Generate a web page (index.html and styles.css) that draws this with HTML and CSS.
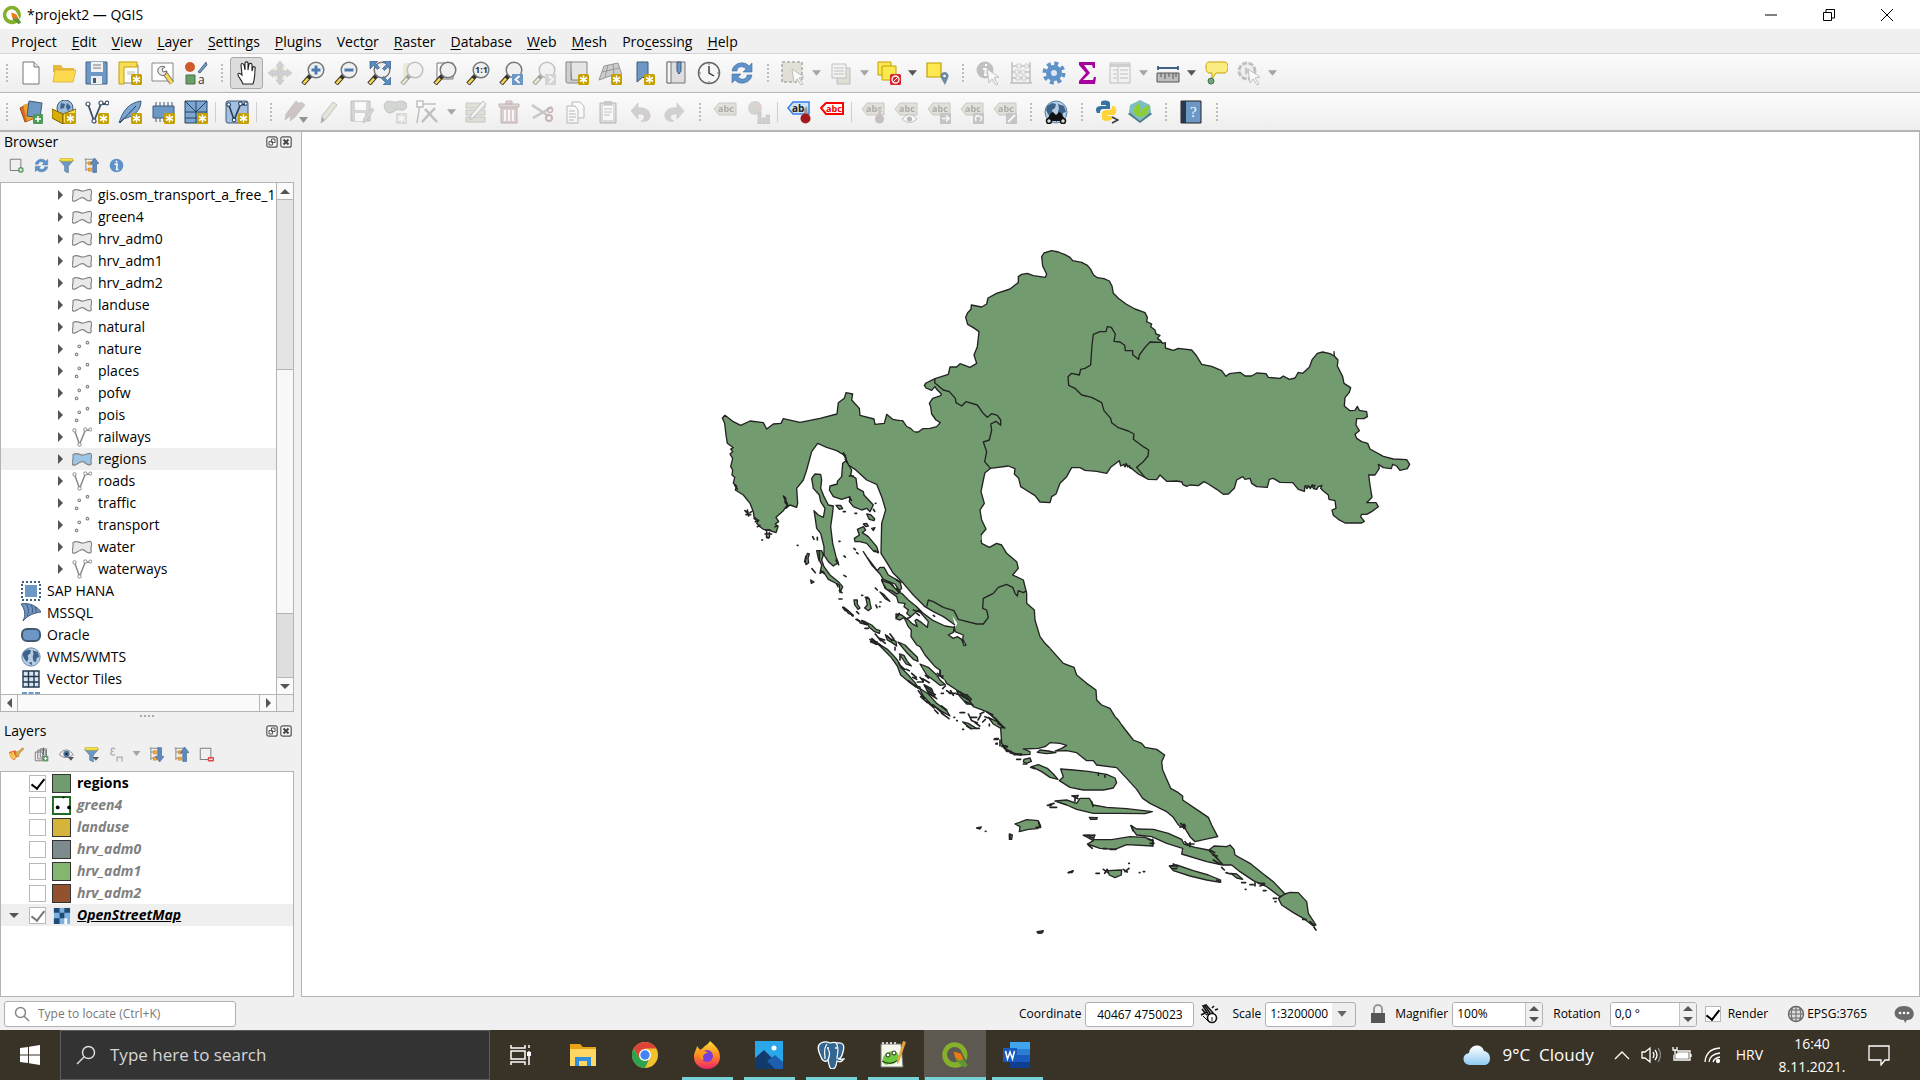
FILE: index.html
```html
<!DOCTYPE html>
<html lang="en">
<head>
<meta charset="utf-8">
<title>*projekt2 — QGIS</title>
<link rel="stylesheet" href="styles.css">
</head>
<body>
<svg class="gradients" aria-hidden="true">
  <linearGradient id="gFox" x1="0" y1="0" x2="0" y2="1"><stop offset="0" stop-color="#ffe03a"/><stop offset=".5" stop-color="#ff8a1e"/><stop offset="1" stop-color="#f0246b"/></linearGradient>
  <linearGradient id="gCloud" x1="0" y1="0" x2="0" y2="1"><stop offset="0" stop-color="#ffffff"/><stop offset="1" stop-color="#8fcbf2"/></linearGradient>
</svg>
<svg class="sprite" aria-hidden="true">
  <symbol id="badge" viewBox="0 0 24 24"><rect x="13" y="13" width="11" height="11" rx="1.500" fill="#c4a000"/><path d="M18.500 14.500v8M15 16.500l7 4M22 16.500l-7 4" stroke="#fff" stroke-width="1.500"/></symbol>
  <symbol id="mag" viewBox="0 0 24 24"><path d="M10 14l-8 9" stroke="#333" stroke-width="4.500"/><path d="M7 17.500l-4.500 5" stroke="#fcd94a" stroke-width="2.600"/><circle cx="15" cy="9" r="7.800" fill="#eef0f1" stroke="#777" stroke-width="1.500"/></symbol>
  <symbol id="tri" viewBox="0 0 8 6"><path d="M0 0h8L4 5z" fill="currentColor"/></symbol>
  <symbol id="q" viewBox="0 0 24 24"><path d="M12 1a11 11 0 1 0 7 19.500l-3.500-3.500A6.500 6.500 0 1 1 18 10l3.500 7A11 11 0 0 0 12 1z" fill="#84b02c"/><path d="M12 11l5 1 6 9-3 2-7-6z" fill="#5d9632"/><path d="M11 9l6 2 2 4-3 2-4-3z" fill="#ee7913"/></symbol>
  <symbol id="new" viewBox="0 0 24 24"><path d="M4 1h11l5 5v17H4z" fill="#fff" stroke="#777"/><path d="M15 1v5h5" fill="#e8e8e8" stroke="#777"/></symbol>
  <symbol id="open" viewBox="0 0 24 24"><path d="M1 4h8l2 3h11v4H1z" fill="#e5b93c"/><path d="M1 21L3 9h21l-3 12z" fill="#fcd94f" stroke="#d9ae2e" stroke-width=".8"/></symbol>
  <symbol id="save" viewBox="0 0 24 24"><path d="M1 1h21v22H1z" fill="#6d97c4" stroke="#456283"/><path d="M6 1h12v10H6z" fill="#f3f3f3"/><path d="M8 4h8M8 7h8" stroke="#777"/><path d="M6 15h11v8H6z" fill="#eee"/><path d="M8 17h3v5H8z" fill="#415a75"/></symbol>
  <symbol id="layout" viewBox="0 0 24 24"><path d="M5 4h15v18H5z" fill="#fff" stroke="#888"/><path d="M1 1h18v5H6v17H1z" fill="#f7dd5a" stroke="#c4a000"/><path d="M9 10h8v4H9z" fill="#ddd"/><use href="#badge"/></symbol>
  <symbol id="layman" viewBox="0 0 24 24"><path d="M1 2h21v18H1z" fill="#fff" stroke="#888"/><path d="M13 11l8 11" stroke="#777" stroke-width="5"/><path d="M13 11l8 11" stroke="#fcd94a" stroke-width="3"/><path d="M7 8a5 5 0 0 0 7 6l2-4-4 1-1-3 3-2a5 5 0 0 0-7 2z" fill="#eee" stroke="#666"/></symbol>
  <symbol id="style" viewBox="0 0 24 24"><circle cx="6" cy="6" r="5" fill="#cf5a2b"/><path d="M14 11l8-10 1 3-7 8z" fill="#6d97c4" stroke="#415a75" stroke-width=".8"/><path d="M2 14h9v9H2z" fill="#6a9f6a" stroke="#46704a"/><text x="14" y="23" font-size="12" font-family="Open Sans, sans-serif" fill="#333">a</text></symbol>
  <symbol id="hand" viewBox="0 0 24 24"><path d="M8 23c-1-4-6-8-5-10s4 1 4 1L6 4c0-2 2-2 3 0l1 5V2c1-2 3-1 3 0v7l1-6c1-1 3-1 3 1v6l1-4c1-1 3 0 2 2 0 6 0 9-2 15z" fill="#fff" stroke="#222" stroke-width="1.100"/></symbol>
  <symbol id="pansel" viewBox="0 0 24 24"><path d="M6 6h11v11H6z" fill="#e6d98a"/><path d="M12 0l4 5h-2v5h5V8l5 4-5 4v-2h-5v5h2l-4 5-4-5h2v-5H5v2l-5-4 5-4v2h5V5H8z" fill="#98a2ac" stroke="#6b737b" stroke-width=".6"/></symbol>
  <symbol id="zin" viewBox="0 0 24 24"><use href="#mag"/><path d="M15 4.500v9M10.500 9h9" stroke="#4a7ab0" stroke-width="3"/></symbol>
  <symbol id="zout" viewBox="0 0 24 24"><use href="#mag"/><path d="M10.500 9h9" stroke="#4a7ab0" stroke-width="3"/></symbol>
  <symbol id="zfull" viewBox="0 0 24 24"><use href="#mag"/><path d="M3 0h8L8.500 2.500l4 4-2 2-4-4L3 8zM24 0v8l-2.500-2.500-4 4-2-2 4-4L16 0zM24 24h-8l2.500-2.500-4-4 2-2 4 4L24 16z" fill="#5b8cc0" stroke="#3d5f85" stroke-width=".7"/></symbol>
  <symbol id="zsel" viewBox="0 0 24 24"><path d="M3 2h14v14H3z" fill="#e6d98a"/><use href="#mag"/></symbol>
  <symbol id="zlay" viewBox="0 0 24 24"><path d="M4 2h16v16H4z" fill="#fff" stroke="#777"/><use href="#mag"/></symbol>
  <symbol id="z11" viewBox="0 0 24 24"><use href="#mag"/><text x="9" y="12" font-size="9" font-weight="700" font-family="Open Sans, sans-serif" fill="#333">1:1</text></symbol>
  <symbol id="zlast" viewBox="0 0 24 24"><use href="#mag"/><path d="M13 13h11v11H13z" fill="#6d97c4"/><path d="M20.500 15l-4 3.500 4 3.500" fill="none" stroke="#fff" stroke-width="1.800"/></symbol>
  <symbol id="znext" viewBox="0 0 24 24"><use href="#mag"/><path d="M13 13h11v11H13z" fill="#aaa"/><path d="M17 15l4 3.500-4 3.500" fill="none" stroke="#fff" stroke-width="1.800"/></symbol>
  <symbol id="map2d" viewBox="0 0 24 24"><path d="M5 1h17v20H7z" fill="#e4e4e4" stroke="#888"/><path d="M1 1h5v18h9v3H3c-2 0-2-1-2-3z" fill="#cfcfcf" stroke="#888"/><use href="#badge"/></symbol>
  <symbol id="map3d" viewBox="0 0 24 24"><path d="M6 5l14-3 4 12-12 1-11 4z" fill="#ccc" stroke="#999"/><path d="M4 11l17-4M10 4L7 16M15 3l1 12" stroke="#999" fill="none"/><use href="#badge"/></symbol>
  <symbol id="bmnew" viewBox="0 0 24 24"><path d="M6 1h11v20l-5-5-6 5z" fill="#6d97c4" stroke="#415a75"/><use href="#badge"/></symbol>
  <symbol id="bmshow" viewBox="0 0 24 24"><path d="M3 1h18v21H3z" fill="#ddd" stroke="#777"/><path d="M3 1h4v21H3z" fill="#f5f5f5" stroke="#777"/><path d="M13 1h4v9l-2 3-2-3z" fill="#6d97c4" stroke="#415a75"/></symbol>
  <symbol id="clock" viewBox="0 0 24 24"><circle cx="12" cy="12" r="10.500" fill="#f6f6f6" stroke="#666" stroke-width="1.500"/><path d="M12 5v7l5 3" stroke="#333" stroke-width="1.400" fill="none"/><path d="M12 2v2M12 20v2M2 12h2M20 12h2" stroke="#777"/></symbol>
  <symbol id="refresh" viewBox="0 0 24 24"><path d="M2 10C3 2 14-1 19 5l3-3v9h-9l3-3C12 4 7 6 7 10z" fill="#5f92c9" stroke="#45709f" stroke-width=".6"/><path d="M22 14c-1 8-12 11-17 5l-3 3v-9h9l-3 3c4 4 9 2 9-2z" fill="#5f92c9" stroke="#45709f" stroke-width=".6"/></symbol>
  <symbol id="cursor" viewBox="0 0 24 24"><path d="M11 8l12 8-5 1 4 6-2 1-4-6-3 4z" fill="#fff" stroke="#777"/></symbol>
  <symbol id="selrect" viewBox="0 0 24 24"><path d="M1 1h20v20H1z" fill="#ccc59a" stroke="#444" stroke-dasharray="3 2" stroke-width="1.500"/><use href="#cursor"/></symbol>
  <symbol id="selform" viewBox="0 0 24 24"><path d="M8 7h13v16H8z" fill="#ccc59a" stroke="#777"/><path d="M3 3h14v14H3z" fill="#eee" stroke="#777"/><path d="M5 7h10M5 10h10M5 13h10" stroke="#777"/></symbol>
  <symbol id="desel" viewBox="0 0 24 24"><path d="M1 1h13v13H1z" fill="#fce94f" stroke="#c4a000"/><path d="M5 5h14v14H5z" fill="#fce94f" stroke="#c4a000"/><rect x="13" y="13" width="11" height="11" rx="1.500" fill="#d9252b"/><circle cx="18.500" cy="18.500" r="3.500" fill="none" stroke="#fff" stroke-width="1.300"/><path d="M16 21l5-5" stroke="#fff"/></symbol>
  <symbol id="selloc" viewBox="0 0 24 24"><path d="M2 2h14v14H2z" fill="#fce94f" stroke="#c4a000" stroke-width="1.200"/><path d="M20 24l-4-7a4 4 0 1 1 7 0z" fill="#6c8aa0"/><circle cx="19.500" cy="15" r="1.300" fill="#fff"/></symbol>
  <symbol id="info" viewBox="0 0 24 24"><circle cx="11" cy="11" r="10" fill="#5f92c9"/><path d="M11 4v3M8 9h4l-1 8h3" stroke="#fff" stroke-width="2.200" fill="none"/></symbol>
  <symbol id="ident" viewBox="0 0 24 24"><circle cx="9" cy="9" r="8.500" fill="#777"/><path d="M10 3v2M7 8h3l-1 6h2" stroke="#fff" stroke-width="2" fill="none"/><use href="#cursor"/></symbol>
  <symbol id="abacus" viewBox="0 0 24 24"><path d="M3 1v21M21 1v21M1 22h22M3 5h18M3 11h18M3 17h18" stroke="#777" stroke-width="1.500"/><path d="M8 3h4v4H8zM16 3h3v4h-3zM6 9h4v4H6zM12 9h4v4h-4zM7 15h4v4H7zM13 15h4v4h-4z" fill="#eee" stroke="#999"/></symbol>
  <symbol id="gear" viewBox="0 0 24 24"><circle cx="12" cy="12" r="9.500" fill="none" stroke="#5f92c9" stroke-width="4" stroke-dasharray="4 3.460"/><circle cx="12" cy="12" r="5.500" fill="#dce8f4" stroke="#5f92c9" stroke-width="5"/></symbol>
  <symbol id="sigma" viewBox="0 0 24 24"><path d="M4 1h16v6h-2l-1-3H9l6 8-7 7h10l1-3h2l-1 7H4v-3l7-8-7-8z" fill="#a5009c"/></symbol>
  <symbol id="table" viewBox="0 0 24 24"><path d="M2 2h20v20H2z" fill="#f2f2f2" stroke="#777"/><path d="M2 3h20v3H2z" fill="#999"/><path d="M5 9h4M5 13h4M5 17h4M12 9h8M12 13h8M12 17h8M10 6v16" stroke="#777"/></symbol>
  <symbol id="ruler" viewBox="0 0 24 24"><path d="M2 7h20M2 5v4M22 5v4" stroke="#3d6185" stroke-width="1.800"/><path d="M1 12h22v9H1z" fill="#bdbdbd" stroke="#555"/><path d="M5 12v4M9 12v6M13 12v4M17 12v6M20 12v4" stroke="#555"/></symbol>
  <symbol id="tip" viewBox="0 0 24 24"><path d="M6 1h14c3 0 4 2 4 5s-1 6-4 6h-8l-4 6V12H6c-3 0-4-2-4-6s1-5 4-5z" fill="#fced82" stroke="#c4a000"/><circle cx="7" cy="20" r="3" fill="#71a67a" stroke="#46704a"/></symbol>
  <symbol id="action" viewBox="0 0 24 24"><circle cx="10" cy="10" r="8" fill="#e8e8e8" stroke="#777" stroke-width="3" stroke-dasharray="5 1.500"/><path d="M8 6l6 4-6 4z" fill="#888"/><use href="#cursor"/></symbol>
  <symbol id="dsm" viewBox="0 0 24 24"><path d="M1 8l10-5 5 15-10 4z" fill="#d9692a" stroke="#9f4a1b"/><path d="M4 5l10-3 4 15-10 4z" fill="#eaa42a"/><path d="M10 1l13 2-2 15-13-2z" fill="#6d97c4" stroke="#415a75"/><rect x="14" y="14" width="10" height="10" rx="1" fill="#4f9a5a"/><path d="M19 16v6M16 19h6" stroke="#fff" stroke-width="1.500"/></symbol>
  <symbol id="globe" viewBox="0 0 24 24"><circle cx="12" cy="12" r="11" fill="#b6cce3" stroke="#5b7ea3"/><path d="M3 6l5-3 4 1-1 4-3 2 1 4-2 4-3-4-2-4zM14 4l6 2 2 6-3 1-1 5-3-1-1-5 1-4zM9 19l4-1v4z" fill="#3f6288"/></symbol>
  <symbol id="gpkg" viewBox="0 0 24 24"><circle cx="13" cy="8" r="8" fill="#9dbbdc" stroke="#415a75"/><path d="M9 3l4 1-1 4-4 1zM15 3l4 4-3 4-2-4z" fill="#3f6288"/><path d="M0 9l11 5v10L0 18z" fill="#d9ad00" stroke="#7a6200"/><path d="M11 14l13-5v9l-13 6z" fill="#fcdc55" stroke="#7a6200"/><use href="#badge"/></symbol>
  <symbol id="vee" viewBox="0 0 24 24"><path d="M3 4l6 17L16 4h6" fill="none" stroke="currentColor" stroke-width="1.800"/><g fill="#fff" stroke="currentColor" stroke-width="1.200"><circle cx="3" cy="4" r="2"/><circle cx="9" cy="21" r="2"/><circle cx="16" cy="3" r="2"/><circle cx="22" cy="3" r="1.800"/></g></symbol>
  <symbol id="shp" viewBox="0 0 24 24"><use href="#vee" color="#3d5268"/><use href="#badge"/></symbol>
  <symbol id="feather" viewBox="0 0 24 24"><path d="M1 23C5 10 11 3 23 1c0 8-5 15-18 18z" fill="#7da5d1" stroke="#3f5f83"/><path d="M2 23L18 6" stroke="#27425f" fill="none"/><use href="#badge"/></symbol>
  <symbol id="chip" viewBox="0 0 24 24"><path d="M5 2v20M9 2v20M13 2v20M17 2v20M21 2v20" stroke="#415a75"/><path d="M2 6h21v12H2z" fill="#6d97c4" stroke="#415a75"/><use href="#badge"/></symbol>
  <symbol id="meshn" viewBox="0 0 24 24"><path d="M1 1h22v22H1z" fill="#7da5d1" stroke="#27425f"/><path d="M1 12h22M12 1v22M1 1l11 11L23 1M1 18h22" stroke="#27425f" fill="none"/><use href="#badge"/></symbol>
  <symbol id="virt" viewBox="0 0 24 24"><rect x="1" y="1" width="22" height="22" rx="2" fill="#a4c0de" stroke="#415a75"/><g transform="translate(1 1) scale(.9)"><use href="#vee" width="24" height="24" color="#26415e"/></g><use href="#badge"/></symbol>
  <symbol id="pencil" viewBox="0 0 24 24"><path d="M4 23l1-7L16 2l4 3L9 19z" fill="#d9cfa0" stroke="#777"/><path d="M4 23l1-6 3 3z" fill="#555"/></symbol>
  <symbol id="pencils" viewBox="0 0 24 24"><path d="M1 20l1-6L12 1l4 3L6 16zM6 21l1-6L17 2l4 3L11 17z" fill="#a87f74" stroke="#888"/><path d="M15 17h9l-4.500 6z" fill="#111"/></symbol>
  <symbol id="saved" viewBox="0 0 24 24"><path d="M1 1h19v20H1z" fill="#aaa" stroke="#777"/><path d="M5 2h11v8H5zM5 13h10v8H5z" fill="#fff"/><path d="M13 23l1-5 8-10 2 2-8 11z" fill="#c7a79b" stroke="#888"/></symbol>
  <symbol id="addpoly" viewBox="0 0 24 24"><path d="M2 3c4-4 7 0 11-1s7-2 10 1-1 8-5 7-5 0-8 2-7 1-8-3-1-4 0-6z" fill="#9aae96" stroke="#777"/><rect x="13" y="13" width="11" height="11" rx="1" fill="#bba"/><path d="M18.500 14.500v8M15 16.500l7 4M22 16.500l-7 4" stroke="#fff" stroke-width="1.500"/></symbol>
  <symbol id="vertex" viewBox="0 0 24 24"><path d="M3 4h17M4 4l-3 19" stroke="#777" stroke-width="1.500"/><path d="M1 1h6v6H1z" fill="#fff" stroke="#777" stroke-width="1.500"/><path d="M6 22L19 8M9 9l12 13" stroke="#777" stroke-width="2.500"/></symbol>
  <symbol id="multi" viewBox="0 0 24 24"><path d="M2 3h19v5H2zM2 10h19v5H2zM2 17h19v5H2z" fill="#c9c59c" stroke="#888"/><path d="M6 20l1-5L19 1l3 3L10 17z" fill="#eee" stroke="#777"/></symbol>
  <symbol id="trash" viewBox="0 0 24 24"><path d="M4 8h16v15H4z" fill="#c99" stroke="#855"/><path d="M2 4h20v3H2zM9 1h6v3H9z" fill="#caa" stroke="#855"/><path d="M8 10v11M12 10v11M16 10v11" stroke="#fff" stroke-width="2"/></symbol>
  <symbol id="cut" viewBox="0 0 24 24"><path d="M2 5l15 10M3 18L22 7" stroke="#888" stroke-width="2.500"/><circle cx="19" cy="18" r="3" fill="none" stroke="#a55" stroke-width="2"/><circle cx="20" cy="10" r="2.500" fill="none" stroke="#a55" stroke-width="1.500"/></symbol>
  <symbol id="copy" viewBox="0 0 24 24"><path d="M9 2h8l4 4v12H9z" fill="#fff" stroke="#666"/><path d="M4 6h8l3 4v13H4z" fill="#fff" stroke="#666"/><path d="M6 11h6M6 14h7M6 17h7M6 20h5" stroke="#666"/></symbol>
  <symbol id="paste" viewBox="0 0 24 24"><path d="M4 3h16v20H4z" fill="#bbb" stroke="#666"/><path d="M7 6h10v14H7z" fill="#fff"/><path d="M8 1h8v4H8z" fill="#888"/><path d="M8 9h8M8 12h8M8 15h6" stroke="#777"/></symbol>
  <symbol id="undo" viewBox="0 0 24 24"><path d="M9 3v5c8-1 13 3 12 9-1 4-5 5-9 4 5-2 5-8-3-7v5L2 11z" fill="#a99a94" stroke="#888" stroke-width=".6"/></symbol>
  <symbol id="redo" viewBox="0 0 24 24"><path d="M15 3v5C7 7 2 11 3 17c1 4 5 5 9 4-5-2-5-8 3-7v5l7-8z" fill="#9aa598" stroke="#888" stroke-width=".6"/></symbol>
  <symbol id="tag" viewBox="0 0 24 24"><path d="M1 9l5-6h17v12H6z" fill="#c9c4a4" stroke="#888"/><text x="5" y="12" font-size="9" font-weight="700" font-family="Open Sans, sans-serif" fill="#444">abc</text></symbol>
  <symbol id="diag" viewBox="0 0 24 24"><circle cx="9" cy="8" r="7" fill="#a8a89c"/><path d="M9 8V1a7 7 0 0 1 7 7z" fill="#c99"/><path d="M12 12h3v12h-3zM16 18h3v6h-3zM20 15h4v9h-4z" fill="#9a9" stroke="#777" stroke-width=".6"/></symbol>
  <symbol id="pinb" viewBox="0 0 24 24"><path d="M1 8l5-6h16v12H6z" fill="#cfe2f8" stroke="#3584e4" stroke-width="1.500"/><text x="5" y="12" font-size="10" font-weight="700" font-family="Open Sans, sans-serif" fill="#222">ab</text><path d="M17 9l3-3 1 9h-4z" fill="#999"/><circle cx="18.500" cy="18.500" r="5" fill="#a11a1e"/></symbol>
  <symbol id="tagred" viewBox="0 0 24 24"><path d="M1 8l5-5h17v11H6z" fill="#fff" stroke="#f00" stroke-width="2"/><text x="6" y="12" font-size="9" font-weight="700" font-family="Open Sans, sans-serif" fill="#e00">abc</text></symbol>
  <symbol id="tagpin" viewBox="0 0 24 24"><use href="#tag"/><path d="M17 8h3v8h-3z" fill="#888"/><circle cx="18.500" cy="19" r="4.500" fill="#977"/></symbol>
  <symbol id="tageye" viewBox="0 0 24 24"><use href="#tag"/><path d="M8 19q8-9 15 0-8 7-15 0z" fill="#fff" stroke="#777"/><circle cx="15.500" cy="19" r="2.500" fill="#666"/></symbol>
  <symbol id="tagmove" viewBox="0 0 24 24"><use href="#tag"/><path d="M13 13h11v11H13z" fill="#888"/><path d="M15 18.500h7M19 15.500l3 3-3 3" stroke="#fff" stroke-width="1.600" fill="none"/></symbol>
  <symbol id="tagrot" viewBox="0 0 24 24"><use href="#tag"/><path d="M13 13h11v11H13z" fill="#888"/><path d="M16 21q-2-6 3-5t1 5" stroke="#fff" stroke-width="1.600" fill="none"/></symbol>
  <symbol id="tagedit" viewBox="0 0 24 24"><use href="#tag"/><path d="M13 13h11v11H13z" fill="#888"/><path d="M15 22l7-7" stroke="#fff" stroke-width="2"/></symbol>
  <symbol id="meta" viewBox="0 0 24 24"><use href="#globe"/><path d="M7 13l2-1 3 3 3-3 2 1 5 8H2z" fill="#111"/><circle cx="5" cy="21" r="2.500" fill="#ddd" stroke="#111" stroke-width="1.500"/><circle cx="19" cy="21" r="2.500" fill="#ddd" stroke="#111" stroke-width="1.500"/></symbol>
  <symbol id="python" viewBox="0 0 24 24"><path d="M6 2c2-2 8-2 9 1v6H8c-2 0-3 1-3 4H2C0 9 1 6 6 6h5V5H6z" fill="#3772a4"/><path d="M17 6h2c3 1 3 8 0 9h-7v1h5v3c-2 3-10 2-10 0v-6c0-2 2-3 4-3h3c2 0 3-1 3-4z" fill="#ffd43b"/><path d="M17 17l6 3-6 3" stroke="#333" fill="none" stroke-width="1.500"/></symbol>
  <symbol id="leaf" viewBox="0 0 24 24"><path d="M0 14l12 9 12-9-3-3H3z" fill="#4b7b83"/><path d="M2 5l10-5 10 5 1 7-11 9L1 12z" fill="#7fbdc3"/><path d="M10 17C3 12 6 7 11 3c2 4 2 9-1 14zM12 17c0-8 4-10 9-11 0 6-3 11-9 11z" fill="#8ecf2e"/></symbol>
  <symbol id="book" viewBox="0 0 24 24"><path d="M2 1h20v22H2z" fill="#6d97c4" stroke="#222"/><path d="M2 1h5v22H2z" fill="#26384d"/><text x="11" y="17" font-size="15" font-family="Liberation Serif, serif" fill="#fff">?</text></symbol>
  <symbol id="poly" viewBox="0 0 22 16"><path d="M1 3c3-3 6-1 10 0s8-4 10-1-1 5 0 9-3 3-5 2-3-4-7-2-6 4-8 3 1-6 0-11z" fill="currentColor" stroke="#858585" stroke-width="1.300"/></symbol>
  <symbol id="pts" viewBox="0 0 22 18"><g fill="#fff" stroke="#888" stroke-width="1.300"><circle cx="5" cy="15" r="1.400"/><circle cx="8" cy="6" r="1.400"/><circle cx="17" cy="2" r="1.400"/></g></symbol>
  <symbol id="filter" viewBox="0 0 24 24"><path d="M1 4h22l-8 9v11l-6-3v-8z" fill="#6d97c4" stroke="#567ba3"/><path d="M2 1h20v4H2z" fill="#fce94f" stroke="#c4a000"/></symbol>
  <symbol id="collapse" viewBox="0 0 24 24"><path d="M3 1v20M3 8h5M3 18h5M1 2h16" stroke="#888" stroke-width="1.500"/><path d="M7 6h5v5H7zM7 16h5v5H7z" fill="#f9ad41" stroke="#d77b13"/><path d="M17 0l7 9h-4v14h-6V9h-4z" fill="#5e8bbd" stroke="#3e638c"/></symbol>
  <symbol id="expand" viewBox="0 0 24 24"><path d="M3 1v20M3 8h5M3 18h5M1 2h16" stroke="#888" stroke-width="1.500"/><path d="M7 6h5v5H7zM7 16h5v5H7z" fill="#f9ad41" stroke="#d77b13"/><path d="M17 24l7-9h-4V1h-6v14h-4z" fill="#5e8bbd" stroke="#3e638c"/></symbol>
  <symbol id="addsel" viewBox="0 0 24 24"><path d="M2 2h17v18H2z" fill="#f0f0f0" stroke="#777" stroke-width="1.500"/><circle cx="19" cy="19" r="4.500" fill="#5e9a63"/><path d="M19 16.500v5M16.500 19h5" stroke="#fff" stroke-width="1.500"/></symbol>
  <symbol id="remsel" viewBox="0 0 24 24"><path d="M2 2h17v18H2z" fill="#f0f0f0" stroke="#777" stroke-width="1.500"/><rect x="14" y="16" width="10" height="7" rx="2" fill="#e04848"/><path d="M16 19.500h6" stroke="#fff" stroke-width="1.800"/></symbol>
  <symbol id="brush" viewBox="0 0 24 24"><path d="M0 8l10-3 5 8-7 8C2 18 1 14 0 8z" fill="#e8602c"/><path d="M5 8l5 9M1 10l7 9" stroke="#f9d35c" stroke-width="3"/><path d="M10 8l5-1 7-6 2 2-7 7-2 6-4-2z" fill="#dca94b" stroke="#a87a2b" stroke-width=".8"/></symbol>
  <symbol id="addgrp" viewBox="0 0 24 24"><path d="M2 8h12v14H2zM6 5h12v14H6zM10 3h10v13H10z" fill="#f0f0f0" stroke="#777" stroke-width="1.500"/><path d="M15 1v12" stroke="#456b95" stroke-width="2"/><rect x="14" y="14" width="9" height="9" rx="2" fill="#5e9a63"/><path d="M18.500 16v5M16 18.500h5" stroke="#fff" stroke-width="1.500"/></symbol>
  <symbol id="eye" viewBox="0 0 24 24"><path d="M0 12Q11-3 23 12 11 22 0 12z" fill="#eee" stroke="#888" stroke-width="1.500"/><circle cx="12" cy="11" r="5" fill="#4c749e"/><circle cx="12" cy="11" r="2" fill="#222"/><path d="M14 16h10l-5 6z" fill="#555"/></symbol>
  <symbol id="filter2" viewBox="0 0 24 24"><use href="#filter"/><path d="M14 16h10l-5 6z" fill="#555"/></symbol>
  <symbol id="expr" viewBox="0 0 24 24"><path d="M10 3C3-1 1 7 7 7 0 8 2 15 10 12M13 23v-7h8v7" stroke="#aaa" stroke-width="2" fill="none"/></symbol>
  <symbol id="float" viewBox="0 0 12 12"><rect x=".8" y=".8" width="10.400" height="10.400" rx="2" fill="#f5f5f5" stroke="#555" stroke-width="1.200"/><path d="M5.500 3h3.500v3.500H5.500zM3 5.500h3.500V9H3z" fill="#f5f5f5" stroke="#555"/></symbol>
  <symbol id="close" viewBox="0 0 12 12"><rect x=".8" y=".8" width="10.400" height="10.400" rx="2" fill="#f5f5f5" stroke="#555" stroke-width="1.200"/><path d="M3.500 3.500l5 5M8.500 3.500l-5 5" stroke="#444" stroke-width="2"/></symbol>
</svg>

<div class="app">
  <header class="titlebar">
    <svg class="i20"><use href="#q"/></svg>
    <h1>*projekt2 — QGIS</h1>
    <div class="winbtns">
      <button aria-label="Minimize"><svg viewBox="0 0 14 14"><path d="M1 7h12"/></svg></button>
      <button aria-label="Restore"><svg viewBox="0 0 14 14"><path d="M1.500 4.500h8v8h-8zM4 4V1.500h8.500V10H10"/></svg></button>
      <button aria-label="Close"><svg viewBox="0 0 14 14"><path d="M1 1l12 12M13 1L1 13"/></svg></button>
    </div>
  </header>

  <nav class="menubar">
    <button>Pro<u>j</u>ect</button><button><u>E</u>dit</button><button><u>V</u>iew</button><button><u>L</u>ayer</button><button><u>S</u>ettings</button><button><u>P</u>lugins</button><button>Vect<u>o</u>r</button><button><u>R</u>aster</button><button><u>D</u>atabase</button><button><u>W</u>eb</button><button><u>M</u>esh</button><button>Pro<u>c</u>essing</button><button><u>H</u>elp</button>
  </nav>

  <div class="toolbar">
    <i class="grip first"></i>
    <button class="tb"><svg><use href="#new"/></svg></button><button class="tb"><svg><use href="#open"/></svg></button><button class="tb"><svg><use href="#save"/></svg></button><button class="tb"><svg><use href="#layout"/></svg></button><button class="tb"><svg><use href="#layman"/></svg></button><button class="tb"><svg><use href="#style"/></svg></button>
    <i class="grip"></i>
    <button class="tb on"><svg><use href="#hand"/></svg></button><button class="tb off"><svg><use href="#pansel"/></svg></button><button class="tb"><svg><use href="#zin"/></svg></button><button class="tb"><svg><use href="#zout"/></svg></button><button class="tb"><svg><use href="#zfull"/></svg></button><button class="tb off"><svg><use href="#zsel"/></svg></button><button class="tb"><svg><use href="#zlay"/></svg></button><button class="tb"><svg><use href="#z11"/></svg></button><button class="tb"><svg><use href="#zlast"/></svg></button><button class="tb off"><svg><use href="#znext"/></svg></button><button class="tb"><svg><use href="#map2d"/></svg></button><button class="tb"><svg><use href="#map3d"/></svg></button><button class="tb"><svg><use href="#bmnew"/></svg></button><button class="tb"><svg><use href="#bmshow"/></svg></button><button class="tb"><svg><use href="#clock"/></svg></button><button class="tb"><svg><use href="#refresh"/></svg></button>
    <i class="grip"></i>
    <button class="tb off"><svg><use href="#selrect"/></svg></button><button class="dd dim"><svg><use href="#tri"/></svg></button><button class="tb off"><svg><use href="#selform"/></svg></button><button class="dd dim"><svg><use href="#tri"/></svg></button><button class="tb"><svg><use href="#desel"/></svg></button><button class="dd"><svg><use href="#tri"/></svg></button><button class="tb"><svg><use href="#selloc"/></svg></button>
    <i class="grip"></i>
    <button class="tb off"><svg><use href="#ident"/></svg></button><button class="tb off"><svg><use href="#abacus"/></svg></button><button class="tb"><svg><use href="#gear"/></svg></button><button class="tb"><svg><use href="#sigma"/></svg></button><button class="tb off"><svg><use href="#table"/></svg></button><button class="dd dim"><svg><use href="#tri"/></svg></button><button class="tb"><svg><use href="#ruler"/></svg></button><button class="dd"><svg><use href="#tri"/></svg></button><button class="tb"><svg><use href="#tip"/></svg></button><button class="tb off"><svg><use href="#action"/></svg></button><button class="dd dim"><svg><use href="#tri"/></svg></button>
  </div>

  <div class="toolbar second">
    <i class="grip first"></i>
    <button class="tb"><svg><use href="#dsm"/></svg></button><button class="tb"><svg><use href="#gpkg"/></svg></button><button class="tb"><svg><use href="#shp"/></svg></button><button class="tb"><svg><use href="#feather"/></svg></button><button class="tb"><svg><use href="#chip"/></svg></button><button class="tb"><svg><use href="#meshn"/></svg></button>
    <i class="sep"></i><button class="tb"><svg><use href="#virt"/></svg></button><i class="sep"></i>
    <i class="grip"></i>
    <button class="tb off"><svg><use href="#pencils"/></svg></button><button class="tb off"><svg><use href="#pencil"/></svg></button><button class="tb off"><svg><use href="#saved"/></svg></button><button class="tb off"><svg><use href="#addpoly"/></svg></button><button class="tb off"><svg><use href="#vertex"/></svg></button><button class="dd dim"><svg><use href="#tri"/></svg></button><button class="tb off"><svg><use href="#multi"/></svg></button><button class="tb off"><svg><use href="#trash"/></svg></button><button class="tb off"><svg><use href="#cut"/></svg></button><button class="tb off"><svg><use href="#copy"/></svg></button><button class="tb off"><svg><use href="#paste"/></svg></button><button class="tb off"><svg><use href="#undo"/></svg></button><button class="tb off"><svg><use href="#redo"/></svg></button>
    <i class="grip"></i>
    <button class="tb off"><svg><use href="#tag"/></svg></button><button class="tb off"><svg><use href="#diag"/></svg></button><i class="sep"></i><button class="tb"><svg><use href="#pinb"/></svg></button><button class="tb"><svg><use href="#tagred"/></svg></button><i class="sep"></i><button class="tb off"><svg><use href="#tagpin"/></svg></button><button class="tb off"><svg><use href="#tageye"/></svg></button><button class="tb off"><svg><use href="#tagmove"/></svg></button><button class="tb off"><svg><use href="#tagrot"/></svg></button><button class="tb off"><svg><use href="#tagedit"/></svg></button>
    <i class="grip"></i><button class="tb"><svg><use href="#meta"/></svg></button>
    <i class="grip"></i><button class="tb"><svg><use href="#python"/></svg></button><button class="tb"><svg><use href="#leaf"/></svg></button>
    <i class="grip"></i><button class="tb"><svg><use href="#book"/></svg></button><i class="grip"></i>
  </div>

  <main class="work">
    <aside class="docks">
      <section class="dock browser">
        <div class="dockhead"><h2>Browser</h2><button><svg><use href="#float"/></svg></button><button><svg><use href="#close"/></svg></button></div>
        <div class="docktools"><button><svg><use href="#addsel"/></svg></button><button><svg><use href="#refresh"/></svg></button><button><svg><use href="#filter"/></svg></button><button><svg><use href="#collapse"/></svg></button><button><svg viewBox="0 0 22 22"><use href="#info" width="24" height="24"/></svg></button></div>
        <div class="treebox">
          <ul class="tree">
            <li class="sub"><svg class="poly"><use href="#poly"/></svg>gis.osm_transport_a_free_1</li>
            <li class="sub"><svg class="poly"><use href="#poly"/></svg>green4</li>
            <li class="sub"><svg class="poly"><use href="#poly"/></svg>hrv_adm0</li>
            <li class="sub"><svg class="poly"><use href="#poly"/></svg>hrv_adm1</li>
            <li class="sub"><svg class="poly"><use href="#poly"/></svg>hrv_adm2</li>
            <li class="sub"><svg class="poly"><use href="#poly"/></svg>landuse</li>
            <li class="sub"><svg class="poly"><use href="#poly"/></svg>natural</li>
            <li class="sub"><svg><use href="#pts"/></svg>nature</li>
            <li class="sub"><svg><use href="#pts"/></svg>places</li>
            <li class="sub"><svg><use href="#pts"/></svg>pofw</li>
            <li class="sub"><svg><use href="#pts"/></svg>pois</li>
            <li class="sub"><svg class="vee"><use href="#vee"/></svg>railways</li>
            <li class="sub cur"><svg class="poly blue"><use href="#poly"/></svg>regions</li>
            <li class="sub"><svg class="vee"><use href="#vee"/></svg>roads</li>
            <li class="sub"><svg><use href="#pts"/></svg>traffic</li>
            <li class="sub"><svg><use href="#pts"/></svg>transport</li>
            <li class="sub"><svg class="poly"><use href="#poly"/></svg>water</li>
            <li class="sub"><svg class="vee"><use href="#vee"/></svg>waterways</li>
            <li><svg viewBox="0 0 20 20"><path d="M4 4h12v12H4z" fill="#6d97c4"/><path d="M1 1h18v18H1z" fill="none" stroke="#3f5f83" stroke-width="2" stroke-dasharray="2 2"/></svg>SAP HANA</li>
            <li><svg viewBox="0 0 20 20"><path d="M0 1c9-2 17 3 20 8-7 1-13 3-18 9 3-6 2-12-2-17z" fill="#6d97c4" stroke="#3f5873"/><path d="M5 1c3 4 3 8 1 12M10 2c2 3 2 6 1 8M14 4q2 3 1 5" stroke="#3f5873" fill="none"/></svg>MSSQL</li>
            <li><svg viewBox="0 0 20 20"><rect x="1" y="4" width="18" height="12" rx="5" fill="#6d97c4" stroke="#3f5873" stroke-width="2"/></svg>Oracle</li>
            <li><svg><use href="#globe"/></svg>WMS/WMTS</li>
            <li><svg viewBox="0 0 20 20"><path d="M2 2h16v16H2zM7.500 2v16M13 2v16M2 7.500h16M2 13h16" fill="#d5e3f3" stroke="#25384d" stroke-width="1.400"/></svg>Vector Tiles</li>
            <li><svg viewBox="0 0 20 20"><path d="M1 1h5v5H1zM7.500 1h5v5h-5zM14 1h5v5h-5z" fill="#6d97c4"/></svg></li>
          </ul>
          <div class="vscroll"><button class="up"></button><div class="thumbv"></div><div class="trackv"></div><button class="down"></button></div>
          <div class="hscroll"><button class="left"></button><div class="thumbh"></div><button class="right"></button></div>
          <div class="corner"></div>
        </div>
      </section>
      <div class="split"></div>
      <section class="dock layers">
        <div class="dockhead"><h2>Layers</h2><button><svg><use href="#float"/></svg></button><button><svg><use href="#close"/></svg></button></div>
        <div class="docktools"><button><svg><use href="#brush"/></svg></button><button><svg><use href="#addgrp"/></svg></button><button><svg><use href="#eye"/></svg></button><button><svg><use href="#filter2"/></svg></button><button><svg><use href="#expr"/></svg></button><button class="dd dim"><svg><use href="#tri"/></svg></button><button><svg><use href="#expand"/></svg></button><button><svg><use href="#collapse"/></svg></button><button><svg><use href="#remsel"/></svg></button></div>
        <div class="layerlist">
          <label class="ly vis"><input type="checkbox" checked><i class="sw regions"></i><span>regions</span></label>
          <label class="ly"><input type="checkbox"><svg class="sw4" viewBox="0 0 20 20"><path d="M1 1h18v18H1z" fill="#fff" stroke="#1f6a22" stroke-width="2"/><circle cx="6" cy="12" r="2"/><circle cx="18" cy="12" r="2"/><path d="M10 1h4l-2 1.500z"/></svg><span>green4</span></label>
          <label class="ly"><input type="checkbox"><i class="sw landuse"></i><span>landuse</span></label>
          <label class="ly"><input type="checkbox"><i class="sw adm0"></i><span>hrv_adm0</span></label>
          <label class="ly"><input type="checkbox"><i class="sw adm1"></i><span>hrv_adm1</span></label>
          <label class="ly"><input type="checkbox"><i class="sw adm2"></i><span>hrv_adm2</span></label>
          <label class="ly osm"><input type="checkbox" class="grey" checked><svg class="sw4" viewBox="0 0 20 20"><path d="M2 2h17v17H2z" fill="#7db1e0"/><path d="M2 2h6v5H2zM13 2h6v5h-6zM8 7h5v6H8zM2 13h6v6H2z" fill="#1f4a75"/><path d="M13 13h3v6h-3z" fill="#fff"/></svg><span>OpenStreetMap</span></label>
        </div>
      </section>
    </aside>

    <section class="map">
      <svg viewBox="302 132 1617 864" role="img" aria-label="Map of Croatian regions">
        <!-- Continental north and east -->
        <g transform="translate(900 230) scale(.33333)">
          <path d="M0 572 8 572 20 590 32 595 42 606 55 606 68 596 90 595 110 590 121 578 108 570 95 552 92 530 88 520 98 505 122 497 124 492 110 478 105 470 95 481 78 474 73 466 78 459 105 446 145 433 150 411 170 411 180 401 210 412 230 400 222 375 232 350 237 305 220 293 203 283 197 262 203 248 213 238 214 225 245 231 260 222 264 204 290 190 330 177 345 165 355 158 355 140 365 133 382 130 400 137 436 142 440 133 428 108 425 80 432 69 455 62 475 66 495 74 510 82 518 92 545 97 562 106 572 118 580 134 592 143 612 146 628 153 636 168 640 190 655 205 678 222 705 237 735 248 742 262 740 275 755 282 752 290 765 300 768 312 780 316 772 325 782 332 788 340 796 338 796 354 820 361 835 355 875 360 890 378 905 403 935 409 965 422 978 439 988 431 1020 427 1035 438 1055 438 1070 429 1098 431 1105 442 1140 445 1150 438 1168 448 1185 444 1195 427 1208 430 1228 412 1237 388 1252 370 1268 366 1290 371 1303 378 1302 365 1303 378 1314 390 1312 408 1328 440 1332 460 1352 473 1348 487 1335 503 1333 528 1350 542 1365 541 1372 529 1378 541 1400 545 1402 560 1392 566 1370 566 1368 585 1378 602 1365 613 1370 625 1385 635 1403 640 1410 657 1450 679 1480 687 1520 689 1529 703 1522 716 1500 721 1490 708 1478 703 1474 716 1450 713 1435 703 1438 715 1425 735 1406 735 1410 765 1416 802 1400 818 1428 818 1435 830 1415 845 1400 853 1385 853 1382 860 1393 874 1385 879 1335 879 1315 868 1300 856 1296 840 1308 835 1305 812 1287 808 1285 795 1270 783 1262 775 1266 766 1255 770 1250 778 1240 776 1245 765 1230 772 1225 768 1215 768 1213 784 1195 778 1178 758 1140 757 1120 745 1108 748 1102 772 1070 770 1055 760 1050 745 1035 748 1028 740 1010 750 1003 775 985 792 970 793 950 778 925 762 912 755 895 767 870 765 860 769 848 763 846 756 830 753 800 754 780 735 770 749 745 748 715 732 690 712 675 702 662 708 658 692 650 698 632 712 620 730 590 724 555 721 540 713 515 713 500 740 480 760 468 792 455 800 450 818 420 816 405 797 378 780 362 770 356 745 343 732 345 716 325 708 272 715 255 728 250 750 243 785 253 820 240 840 245 870 258 897 243 915 243 930"/>
          <path class="line" d="M105 446 104 458 130 480 148 485 166 505 168 518 185 528 198 515 232 525 248 548 262 562 275 551 292 556 302 570 302 586 288 574 272 582 275 600 268 630 250 636 260 665 254 695 272 716M786 337 750 336 735 352 718 375 716 388 698 374 698 362 676 362 674 346 660 336 642 334 646 312 634 292 622 290 618 305 600 305 580 313 576 345 572 405 555 415 542 418 538 435 515 430 504 440 506 466 525 475 545 495 575 502 605 518 612 542 632 565 635 578 655 593 685 603 702 612 700 628 730 650 746 660 744 678 730 695 710 712 735 742M670 703l5 8 4-10 4 10 5-4 3 8 6 0M1215 768l6 8 5-8 5 8 6-12 2 10"/>
        </g>
        <!-- Istria, Lika and the northern islands -->
        <g transform="translate(700 380) scale(.33333)">
          <path d="M600 122 578 118 560 103 553 130 525 133 522 117 480 106 478 85 455 60 458 42 438 38 433 55 415 68 411 102 360 115 300 127 250 116 243 130 220 132 200 147 190 128 150 123 122 136 100 125 75 106 67 114 74 130 78 165 82 190 100 203 92 207 98 215 90 222 98 235 92 260 98 270 96 285 104 292 100 310 110 318 106 330 130 345 150 370 160 395 162 410 175 422 170 430 180 440 190 448 205 450 228 458 234 440 226 432 236 425 228 412 250 392 262 375 255 365 258 355 250 348 262 370 258 385 270 375 290 382 293 370 290 325 310 300 320 270 335 215 353 190 380 202 410 212 437 228 430 218 437 235 445 255 465 268 500 300 530 313 545 350 557 390 545 430 543 520 562 550 580 580 610 610 640 645 675 680 700 695 730 710 765 735"/>
          <path d="M765 738 762 742 735 738 700 722 668 698 650 680 625 660 605 640 590 635 575 610 560 595 545 598 555 625 590 650 595 668 615 670 612 680 625 690 620 700 632 710 655 690 668 705 685 725 682 742 665 728 650 718 645 722 652 740 635 730 625 720 605 705 588 702 588 716 600 720 612 712 625 740 634 750 633 770 650 795 660 800 675 825 705 860 720 870 720 885 735 900"/>
          <path class="fill" d="M602 124 620 142 645 158 760 200 800 380 843 468 843 480 845 490 868 502 890 490 905 495 920 520 950 545 955 565 938 585 970 600 980 640 980 670 1003 690 1005 720 1020 770 1035 790 1050 805 1070 830 1050 900 735 900 722 885 762 750 772 730 755 705 590 200Z"/>
          <path class="line" d="M843 480 845 490 868 502 890 490 905 495 920 520 950 545 955 565 938 585 970 600 980 640 980 670 1003 690 1005 720 1020 770 1035 790 1050 805"/>
          <path class="line" d="M680 680 685 660 700 665 730 682 762 692 775 718 830 732 850 732 865 712 860 690 848 685 850 655 880 640 895 622 920 613 938 622 945 640 952 648 955 632 970 638 980 632"/>
          <path class="sea" d="M763 740 765 755 790 765 788 778 798 795 792 797 785 778 772 770 760 775 745 765 760 757Z"/>
          <path d="M335 295 345 282 362 283 365 300 362 325 372 350 385 375 400 378 397 405 392 440 398 490 408 530 415 548 400 558 385 545 372 525 372 500 362 460 350 445 345 410 342 392 355 405 370 412 375 385 362 365 358 345 340 325ZM428 250 438 242 455 270 452 285 468 295 472 325 490 335 492 345 520 375 510 395 500 385 485 390 460 380 448 365 450 350 425 358 400 350 388 330 390 318 412 312 412 304 425 290ZM350 512 365 512 370 525 365 540 372 560 390 585 415 605 428 620 420 638 418 615 385 598 370 575 360 580 365 555 355 535ZM463 475 478 465 472 448 490 440 497 450 487 458 505 470 530 500 535 515 522 515 500 490 480 485 465 485ZM490 515 500 530 532 572 540 562 552 562 565 585 600 605 605 625 598 632 585 612 550 598 540 582 515 555ZM545 602 570 610 598 638 590 642 575 632 560 628 550 612ZM500 402 512 404 524 416 522 422 508 418ZM408 376 422 376 428 386 418 388ZM490 432 500 430 505 438 497 440ZM515 445 525 443 520 452ZM322 520 328 522 324 535 326 548 318 554 316 542ZM462 660 472 660 472 672 480 684 474 688 464 674ZM498 656 508 656 510 670 514 685 505 692 494 684 502 675ZM332 600 342 606 334 610ZM540 636 552 644 570 664 556 656ZM432 682 445 692 460 706 445 700Z"/>
          <path class="speck" d="M135 392l10 10M142 390l4 18M150 398l6-4M138 404h14M162 415l8 6M166 425l10-4M172 440l8-4M196 450h14M195 462h20M200 455v18M208 458v14M185 480h3M292 496h2M200 470l5 4M225 440l8-3M252 350l4 12M256 368l8 8M104 315l8 12M338 470l4 8M352 472v8M417 484h3M432 528l4 3M462 505l4 4M470 518l4 3M432 586l6 4M336 566l10 12M418 632l8 6M417 657h9M410 612l4 8M358 514v28M362 572l10 8M430 395h6M465 400h5M526 370h2M520 388l4 6M450 355l4 6M430 222l8 12M436 238l6 10M448 288h12M485 646h3M496 652h8M526 624l6 6M528 675l3 8M538 680h2M540 666h3M428 682l8 10M470 695l6 6M472 718l8 6M480 728l20 6M495 745h10M485 722l12 4M512 785l18 8M516 776l14 12M590 625l10 10M598 700l-8 12M640 690l18 6M620 716l10-4M700 706l4 3M408 540l8 14M525 512l10 6M318 528l-4 18M590 600l12 8"/>
        </g>
        <!-- Dalmatia and the southern islands -->
        <g transform="translate(960 720) scale(.33333)">
          <path d="M270 -215 310 -170 342 -158 350 -135 380 -110 408 -90 410 -60 425 -45 450 -35 465 -10 475 0 485 15 520 60 545 70 555 82 590 88 614 105 605 125 608 150 632 205 655 218 668 228 668 240 715 272 745 292 755 315 773 350 735 358 705 365 690 350 675 325 655 315 640 292 620 275 600 265 570 250 548 235 530 208 500 175 470 143 410 135 400 122 380 122 350 98 320 92 285 93 305 85 320 76 300 70 270 68 255 80 235 85 190 87 210 95 210 103 180 105 150 95 135 85 125 70 122 25 110 0 80 -25 40 -40 30 -55 15 -75 -10 -90 -40 -110 -45 -120"/>
          <path d="M232 97 240 90 265 93 288 98 260 101ZM192 118 210 114 214 124 200 130 190 126ZM215 140 235 134 262 145 280 162 294 178 270 172 245 155ZM302 147 340 150 385 154 440 163 465 174 470 188 460 204 430 210 370 210 330 202 298 182 310 170ZM285 243 320 240 350 250 360 235 388 235 400 255 440 262 500 266 577 275 555 281 480 280 400 280 350 268 320 255ZM335 228 355 226 350 234ZM388 292 412 293 410 298 392 298ZM165 312 200 299 235 302 242 318 232 326 205 328 178 335 180 320ZM372 346 405 345 400 358 455 359 510 350 555 352 580 362 578 378 500 374 465 388 420 385 382 372 400 362ZM512 316 530 327 580 328 625 340 665 358 672 372 705 382 745 390 768 410 788 435 740 425 665 402 668 385 620 370 575 350 530 345 520 332ZM628 438 650 435 700 452 745 465 782 480 780 487 740 480 690 468 640 452ZM747 390 762 378 800 380 810 375 822 388 825 405 870 430 910 462 940 485 975 522 960 530 920 500 880 482 840 455 815 435 790 435 770 415ZM812 460 830 462 848 478 830 474ZM975 522 990 517 1015 518 1040 545 1045 580 1068 615 1060 618 1030 595 1000 578 965 555 955 535ZM443 452 485 450 484 465 465 473 448 465ZM148 342 157 345 155 358 148 358ZM232 635 250 632 246 639 234 640ZM50 324 64 321 60 327ZM325 458 340 452 336 458Z"/>
          <path class="speck" d="M232 636h16M52 324h8M76 334h2M325 458l12-4M150 344v14M170 118h12M190 132h10M212 142l12 4M262 256h12M270 262h20M282 250l-14 4M340 228l14 8M345 234v10M395 245l4 14M415 160v6M435 166v6M228 322h14M236 308l4 14M370 346h18M388 350l12 4M385 375l12 10M430 386h10M450 388h18M565 358l12 4M570 370h12M578 358v20M515 318l4 14M662 310l14 12M660 322l16-6M672 312v14M675 365l8 10M682 372h20M690 368v12M750 390l14 8M758 404l14 4M760 420l20 12M785 442l8 8M798 458l14 4M845 488h12M870 494h10M895 490h18M900 498l14-6M885 488v10M910 512h8M940 535h10M945 545h3M1028 598h10M1050 605l14 12M1062 622l6 8M630 438h20M636 446h14M640 432l12 8M430 448l14 10M434 460l8-12M490 448l12 8M495 455l12-10M506 430h2M408 460h10M538 458h2M550 455h4M770 480l12 6M856 508h2M102 58h12M108 72h4M128 74l8 10M126 80h16M140 94h14M165 102h20"/>
        </g>
        <!-- Zadar and Kornati archipelago -->
        <g transform="translate(800 560) scale(.33333)">
          <path d="M200 188 215 195 228 208 240 212 238 220 222 214 208 202ZM256 224 270 236 288 244 290 258 276 248 262 240ZM294 246 315 255 335 275 352 292 354 304 340 298 322 280ZM298 282 312 286 322 304 334 318 318 312ZM360 312 385 322 410 345 420 360 436 374 420 376 400 360 380 345ZM215 238 240 258 272 290 292 318 302 345 330 368 355 385 345 368 325 345 305 325 292 300 278 284 262 268ZM358 384 385 402 410 430 440 452 450 468 425 454 392 432 370 408ZM372 374 395 386 405 412 385 398ZM488 486 505 490 530 506 512 506ZM565 472 590 484 612 502 600 504 580 492ZM470 392 495 404 515 432 500 432 480 410Z"/>
          <path class="speck" d="M210 238l18 14M214 246h18M226 222l16 20M234 232l22 18M230 248l10 6M240 236l14 4M262 228l14 14M270 222l12 16M285 262v8M300 288v12M296 308l8 16M302 318l12 10M318 328l10 4M335 340l14 12M338 352l12 6M325 362l22 18M340 374l20 8M352 366h18M360 352l10 12M368 356l20 12M376 346l10 8M374 378l20 14M382 392l24 12M390 402l20 14M355 392l18 24M362 410l20 18M380 424l22 20M398 434l24 20M412 446l24 22M425 460l22 16M404 450l10 10M440 450l-16-12M412 340l16 14M415 348h14M420 332v14M436 378l-8 8M424 400h6M440 392l10 6M448 400h20M452 392l8 14M470 402l14 4M480 396l14 14M486 408l24 14M495 424l24 12M500 404l14 14M480 458h14M462 472h2M470 482h2M505 462l10 20M510 472h20M516 482l16 6M525 488l14 10M534 480l8-14M540 462l12-6M548 486l8-8M555 470l10 4M560 456l18 8M575 466l20 20M585 474l22 24M594 490l20 14M488 508h3M500 498l14 8M530 505h8M585 536h10M588 550h4M606 556l16 4M612 564l8 6M618 572h8M630 578l12 4M642 584h22M600 540v18M568 492v6M350 160l8 6M155 165l4 3M130 142l14 12M168 178l10 6M186 184l14 8"/>
        </g>
      </svg>
    </section>
  </main>

  <footer class="status">
    <label class="locate"><svg viewBox="0 0 16 16"><circle cx="6.500" cy="6.500" r="5" fill="none" stroke="#888" stroke-width="1.500"/><path d="M10 10l5 5" stroke="#888" stroke-width="1.500"/></svg><input type="text" aria-label="Locator" placeholder="Type to locate (Ctrl+K)"></label>
    <div class="statgroup">
      <label for="coord">Coordinate</label><input id="coord" class="box coord" type="text" value="40467 4750023">
      <button class="ext"><svg class="i20" viewBox="0 0 20 20"><path d="M4 2l3-1 7 8-3 4z" fill="#fff" stroke="#111" stroke-width="1.600"/><path d="M3 5l5 6M6 2l7 10M2 11l6-3M13 4l2-2M16 6l3-1" stroke="#111" stroke-width="1.600"/><circle cx="13" cy="14" r="4.500" fill="#fff" stroke="#111" stroke-width="1.600"/><path d="M13 13v4M4 12l6 6" stroke="#111"/></svg></button>
      <label for="scale">Scale</label><span class="combo"><select id="scale" class="box"><option>1:3200000</option></select><svg><use href="#tri"/></svg></span>
      <button class="lock"><svg viewBox="0 0 16 20"><path d="M4 9V5a4 4 0 0 1 8 0v4" fill="none" stroke="#999" stroke-width="2"/><path d="M1 9h14v10H1z" fill="#555"/></svg></button>
      <label for="magn">Magnifier</label><span class="spin magn"><input id="magn" type="text" value="100%"><span><button class="su"></button><button class="sd"></button></span></span>
      <label for="rot">Rotation</label><span class="spin rot"><input id="rot" type="text" value="0,0 °"><span><button class="su"></button><button class="sd"></button></span></span>
      <label class="render"><input type="checkbox" checked>Render</label>
      <button class="crs"><svg viewBox="0 0 18 18"><circle cx="9" cy="9" r="7.500" fill="#ddd" stroke="#666" stroke-width="1.300"/><path d="M9 1v16M1 9h16M3 5h12M3 13h12M5.500 2q-3 7 0 14M12.500 2q3 7 0 14" stroke="#666" fill="none"/></svg>EPSG:3765</button>
      <button class="msg"><svg class="i20" viewBox="0 0 20 20"><path d="M10 2c13 0 12 15 3 14l-2 3-1-3C-3 16-2 2 10 2z" fill="#6a6a6a"/><circle cx="6" cy="9" r="1.300" fill="#fff"/><circle cx="10" cy="9" r="1.300" fill="#fff"/><circle cx="14" cy="9" r="1.300" fill="#fff"/></svg></button>
    </div>
  </footer>

  <footer class="taskbar">
    <button class="start"><svg viewBox="0 0 20 20"><path d="M0 3l8-1v7.500H0zM9 1.800L20 0v9.500H9zM0 10.500h8V18l-8-1zM9 10.500h11V20L9 18.200z" fill="#fff"/></svg></button>
    <label class="search"><svg viewBox="0 0 20 20"><circle cx="12.500" cy="7.500" r="6" fill="none" stroke="#ddd" stroke-width="1.500"/><path d="M8 12l-7 7" stroke="#ddd" stroke-width="1.500"/></svg><input type="text" aria-label="Search" placeholder="Type here to search"></label>
    <div class="apps">
      <button><svg viewBox="0 0 24 24"><path d="M2 2v3h14V2M2 22v-3h14v3M2 8h14v8H2zM20 2v3M20 8v14" fill="none" stroke="#fff" stroke-width="1.500"/><path d="M18 9h4v4h-4z" fill="#fff"/></svg></button>
      <button><svg viewBox="0 0 28 28"><path d="M1 3h10l3 3h13v19H1z" fill="#e8a317"/><path d="M1 8h26v17H1z" fill="#fdd663"/><path d="M6 25v-9h16v9h-4v-5h-8v5z" fill="#2f8fdd"/></svg></button>
      <button><svg viewBox="0 0 28 28"><circle cx="14" cy="14" r="13" fill="#f2c22e"/><path d="M2.700 7.500a13 13 0 0 1 22.600 0H14l-5.600 9.700z" fill="#dd4437"/><path d="M2.700 7.500l5.600 9.700 9.300 2L14 27A13 13 0 0 1 2.700 7.500z" fill="#2da350"/><circle cx="14" cy="14" r="6" fill="#fff"/><circle cx="14" cy="14" r="4.700" fill="#4285f4"/></svg></button>
      <button class="run"><svg viewBox="0 0 28 28"><path d="M17 0c4 4 10 8 10 16a13 12 0 0 1-26 0c0-5 2-6 3-11l3 4 3-2c2-3 5-3 7-7z" fill="url(#gFox)"/><circle cx="14" cy="15" r="6" fill="#7b3fd8"/><path d="M5 9c4-1 7 1 10 3-5 0-6 4-4 7-4-1-7-5-6-10z" fill="#ff9a1f"/></svg></button>
      <button class="run"><svg viewBox="0 0 28 28"><path d="M0 0h28v28H0z" fill="#2aa7e8"/><path d="M0 17l9-8 19 19H0z" fill="#123a6c"/><path d="M12 20l8-6 8 7v7H20z" fill="#1d5fae"/><circle cx="19" cy="7" r="2.500" fill="#fff"/></svg></button>
      <button class="run"><svg viewBox="0 0 28 28"><path d="M4 2c4-2 7-1 9 0 3-1 5-1 7 0 6-1 8 2 6 9-1 4-3 7-5 7 3 1 4 0 6 0-2 3-5 3-7 2-1 6-2 8-5 8s-3-5-4-9c-3 3-6 0-7-3C1 10 0 4 4 2z" fill="#336791" stroke="#fff" stroke-width="1.300"/><path d="M10 3C6 8 8 12 8 18M19 2c4 6 1 10 1 16M11 8q3 4 0 11" fill="none" stroke="#fff" stroke-width="1.200"/><circle cx="11" cy="7" r="1" fill="#fff"/><circle cx="19" cy="7" r="1" fill="#fff"/></svg></button>
      <button class="run"><svg viewBox="0 0 28 28"><path d="M2 3h20l2 23H2z" fill="#f4f7ea" stroke="#777"/><path d="M4 3v-2M8 3v-2M12 3v-2M16 3v-2" stroke="#ccc" stroke-width="2"/><path d="M4 17c2-7 12-9 15-4 3 4-3 12-9 10-5 2-7-1-6-6z" fill="#6fc93c"/><circle cx="9" cy="14" r="2" fill="#fff" stroke="#222"/><circle cx="15" cy="12" r="2" fill="#fff" stroke="#222"/><path d="M3 20q8 5 16-1" stroke="#222" fill="none"/><path d="M27 1l-7 20-2 2V20l6-20z" fill="#e8a33a"/></svg></button>
      <button class="run active"><svg><use href="#q"/></svg></button>
      <button class="run"><svg viewBox="0 0 28 28"><path d="M7 1h20v26H7z" fill="#2b7cd3"/><path d="M7 1h20v7H7z" fill="#41a5ee"/><path d="M7 14h20v7H7z" fill="#185abd"/><path d="M7 21h20v6H7z" fill="#103f91"/><path d="M0 7h14v14H0z" fill="#185abd"/><path d="M2.500 10l2 8L7 11l2.500 7 2-8" fill="none" stroke="#fff" stroke-width="1.500"/></svg></button>
    </div>
    <div class="tray">
      <a href="#weather" class="weather"><svg viewBox="0 0 28 24"><path d="M7 22a6 6 0 0 1-1-12C7 1 19 0 21 8c8 1 8 14 0 14z" fill="url(#gCloud)"/></svg>9°C&nbsp; Cloudy</a>
      <svg class="chev" viewBox="0 0 16 16"><path d="M1 12l7-7 7 7"/></svg>
      <svg viewBox="0 0 20 20"><path d="M1 7h3l5-4v14l-5-4H1zM12 7q2 3 0 6M14 5q4 5 0 10"/><path d="M17 3q5 7 0 14" opacity=".4"/></svg>
      <svg viewBox="0 0 20 20"><path d="M5 6h13v9H2v-5M19 9v3"/><path d="M6 8h10v5H4v-3z" fill="#fff"/><path d="M1 2v3h4V2M3 5v5"/></svg>
      <svg viewBox="0 0 20 20"><path d="M2 17Q3 4 17 3M6 17Q7 9 17 8M10 17q1-4 7-5"/><circle cx="15" cy="16" r="1.500" fill="#fff"/></svg>
      <span class="lang">HRV</span>
      <time>16:40<br>8.11.2021.</time>
      <button class="note"><svg viewBox="0 0 22 22"><path d="M1 2h20v14h-4l-4 5v-5H1z"/></svg></button>
    </div>
  </footer>
</div>
</body>
</html>
```
FILE: styles.css
```css
* { box-sizing: border-box; }
body {
  margin: 0;
  font: 14px/22px "Open Sans", "Noto Sans", sans-serif;
  color: #000;
  background: #f0f0f0;
}
button {
  font: inherit;
  color: inherit;
  background: none;
  border: 0;
  padding: 0;
  display: flex;
  align-items: center;
  justify-content: center;
}
h1, h2 { font: inherit; margin: 0; }
input, select { font: inherit; color: inherit; min-width: 0; }
.sprite { display: none; }
.gradients { position: absolute; width: 0; height: 0; }
.i20 { width: 20px; height: 20px; flex: none; }
.app { display: flex; flex-direction: column; height: 100vh; overflow: hidden; }

/* Title and menu */
.titlebar { display: flex; align-items: center; height: 29px; padding: 0 4px 0 2px; background: #fff; gap: 5px; flex: none; }
.titlebar h1 { flex: 1; }
.winbtns { display: flex; }
.winbtns button { width: 58px; height: 29px; }
.winbtns svg { width: 14px; height: 14px; fill: none; stroke: #000; stroke-width: 1; }
.menubar { display: flex; gap: 15px; height: 24px; padding: 2px 0 0 11px; flex: none; }
.menubar u { text-underline-offset: 2px; }

/* Toolbars */
.toolbar {
  display: flex;
  align-items: center;
  height: 40px;
  flex: none;
  border-top: 1px solid #d4d4d4;
  border-bottom: 1px solid #b4b4b4;
  background: linear-gradient(#fbfbfb, #eeeeee);
}
.toolbar.second { height: 39px; border-top-color: #fff; border-bottom-width: 2px; }
.tb { width: 33px; height: 32px; flex: none; border-radius: 3px; }
.tb svg { width: 24px; height: 24px; }
.tb.off svg { opacity: .42; filter: saturate(.6); }
.tb.on { background: #dcdcdc; border: 1px solid #a9a9a9; }
.dd { width: 15px; height: 32px; flex: none; color: #555; }
.dd svg { width: 9px; height: 7px; }
.dd.dim { color: #a5a5a5; }
.grip {
  width: 4px;
  height: 20px;
  margin: 0 6px 0 8px;
  flex: none;
  background: radial-gradient(circle, #bdbdbd 1px, transparent 1px) 0 0 / 4px 4px;
}
.grip.first { margin: 0 5px; }
.sep { width: 1px; height: 20px; margin: 0 4px 0 3px; background: #cfcfcf; flex: none; }

/* Docks */
.work { display: flex; flex: 1; min-height: 0; }
.docks { width: 301px; flex: none; display: flex; flex-direction: column; padding-right: 7px; }
.dock { display: flex; flex-direction: column; min-height: 0; }
.browser { flex: 580 1 0; }
.layers { flex: 276 1 0; }
.dockhead { display: flex; height: 20px; align-items: center; padding: 0 2px 0 4px; gap: 2px; flex: none; }
.dockhead h2 { flex: 1; }
.dockhead svg { width: 12px; height: 12px; }
.docktools { display: flex; height: 26px; margin-bottom: 4px; align-items: center; padding-left: 4px; flex: none; }
.docktools button { width: 25px; }
.docktools .dd { width: 15px; }
.docktools svg { width: 15px; height: 15px; }
.docktools .dd svg { width: 9px; height: 6px; }
.split { height: 9px; flex: none; margin: 0 auto; width: 16px; background: radial-gradient(circle, #aaa 1px, transparent 1px) 0 2px / 4px 4px repeat-x; }

.treebox {
  flex: 1;
  min-height: 0;
  display: grid;
  grid-template: minmax(0, 1fr) 17px / minmax(0, 1fr) 17px;
  border: 1px solid #b4b4b4;
  background: #fff;
}
.tree { list-style: none; margin: 0; padding: 1px 0 0; overflow: hidden; }
.tree li { display: flex; align-items: center; height: 22px; padding-left: 20px; gap: 6px; white-space: nowrap; }
.tree svg { width: 20px; height: 20px; flex: none; }
.tree .sub { padding-left: 57px; }
.tree .sub::before { content: ""; flex: none; border: 5px solid transparent; border-left-color: #555; border-right: 0; margin-right: 3px; }
.tree .poly { height: 15px; color: #e9e9e9; }
.tree .blue { color: #9cc5e6; }
.tree .vee { color: #888; }
.tree .cur { background: #efefef; }

.vscroll { display: flex; flex-direction: column; border-left: 1px solid #b4b4b4; background: #f8f8f8; }
.vscroll button, .hscroll button { flex: none; width: 16px; height: 16px; background: #fafafa; }
.vscroll button::after, .hscroll button::after { content: ""; border: 5px solid transparent; }
.vscroll .up::after { border-bottom-color: #555; border-top: 0; }
.vscroll .down::after { border-top-color: #555; border-bottom: 0; }
.thumbv { flex: 170; background: #e4e4e4; border: solid #b4b4b4; border-width: 1px 0; }
.trackv { flex: 245; }
.vscroll::after { content: ""; order: 2; flex: 64; background: #dedede; border: solid #b4b4b4; border-width: 1px 0; }
.vscroll .down { order: 3; }
.hscroll { display: flex; border-top: 1px solid #b4b4b4; }
.hscroll .left::after { border-right-color: #555; border-left: 0; }
.hscroll .right::after { border-left-color: #555; border-right: 0; }
.thumbh { flex: 1; background: #fafafa; border: solid #b4b4b4; border-width: 0 1px; }
.corner { background: #f0f0f0; border: solid #b4b4b4; border-width: 1px 0 0 1px; }

.layerlist { flex: 1; background: #fff; border: 1px solid #b4b4b4; overflow: hidden; }
.ly { display: flex; align-items: center; height: 22px; padding-left: 28px; gap: 6px; font-weight: 700; font-style: italic; color: #808080; }
.ly.vis { color: #000; font-style: normal; }
.ly.osm { color: #000; background: #efefef; text-decoration: underline; padding-left: 8px; }
.ly.osm::before { content: ""; border: 5px solid transparent; border-top-color: #555; border-bottom: 0; margin-right: 4px; }
.sw, .sw4 { width: 19px; height: 19px; flex: none; }
.sw { border: 1px solid #333; }
.regions { background: #729b6f; }
.landuse { background: #d5b43c; }
.adm0 { background: #7d8b8f; }
.adm1 { background: #85b66f; }
.adm2 { background: #91522d; }
input[type="checkbox"] { appearance: none; margin: 0; width: 17px; height: 17px; border: 1px solid #b8b8b8; background: #fff; display: grid; place-items: center; flex: none; }
input[type="checkbox"]:checked::after { content: ""; width: 6px; height: 11px; border: solid #000; border-width: 0 2px 2px 0; transform: rotate(38deg); margin-top: -2px; }
input.grey:checked::after { border-color: #777; }

/* Map canvas */
.map { flex: 1; min-width: 0; background: #fff; border: 1px solid #b4b4b4; border-top: 0; }
.map svg { display: block; width: 100%; height: 100%; }
.map path { fill: #729b6f; stroke: #232323; stroke-width: 4; stroke-linejoin: round; }
.map .line { fill: none; }
.map .fill { stroke: none; }
.map .sea { fill: #fff; }
.map .speck { fill: none; stroke-width: 5; stroke-linecap: round; }

/* Status bar */
.status { display: flex; justify-content: space-between; align-items: center; height: 33px; padding: 1px 6px 0 4px; flex: none; font-size: 12px; }
.locate { display: flex; align-items: center; width: 232px; height: 26px; border: 1px solid #b0b0b0; border-radius: 3px; background: #fff; padding-left: 9px; gap: 8px; }
.locate svg { width: 16px; height: 16px; }
.locate input, .search input { border: 0; background: none; outline: 0; flex: 1; padding: 0; }
.locate input::placeholder { color: #777; }
.statgroup { display: flex; align-items: center; }
.box { height: 25px; border: 1px solid #b0b0b0; border-radius: 3px; background: #fff; }
.coord { width: 109px; margin: 0 5px 0 4px; text-align: center; padding: 0; }
.ext { margin-right: 13px; }
.combo { display: flex; align-items: center; margin: 0 14px 0 4px; position: relative; }
.combo select { appearance: none; width: 91px; padding: 0 4px; background: linear-gradient(90deg, #fff 66px, #eee 66px); }
.combo svg { position: absolute; right: 9px; width: 10px; height: 7px; color: #666; pointer-events: none; }
.lock { margin-right: 9px; }
.lock svg { width: 16px; height: 20px; }
.spin { display: flex; height: 25px; width: 91px; margin: 0 10px 0 4px; border: 1px solid #b0b0b0; border-radius: 3px; background: #fff; overflow: hidden; }
.spin input { border: 0; flex: 1; width: 0; padding: 0 4px; }
.spin > span { width: 17px; background: #f0f0f0; border-left: 1px solid #c4c4c4; display: flex; flex-direction: column; }
.spin button { flex: 1; }
.spin button::after { content: ""; border: 5px solid transparent; }
.spin .su::after { border-bottom-color: #555; border-top: 0; }
.spin .sd::after { border-top-color: #555; border-bottom: 0; }
.spin.rot { width: 87px; margin-left: 9px; margin-right: 8px; }
.render { display: flex; align-items: center; gap: 7px; margin-right: 19px; }
.render input { width: 16px; height: 16px; }
.crs { gap: 2px; margin-right: 27px; }
.crs svg { width: 18px; height: 18px; }

/* Windows taskbar */
.taskbar { display: flex; height: 50px; flex: none; background: #393226; color: #fff; align-items: stretch; }
.start { width: 60px; }
.start svg { width: 20px; height: 20px; }
.search { display: flex; align-items: center; gap: 14px; width: 430px; padding-left: 15px; background: #333; border: 1px solid #5c5c5c; font-size: 17px; }
.search svg { width: 20px; height: 20px; }
.search input::placeholder { color: #d6d6d6; }
.apps { display: flex; }
.apps button { width: 62px; }
.apps svg { width: 28px; height: 28px; }
.apps button:first-child svg { width: 24px; height: 24px; }
.apps .run { background: linear-gradient(#76d2d6, #76d2d6) center bottom / 51px 3px no-repeat; }
.apps .active { background: linear-gradient(#76d2d6, #76d2d6) center bottom / 61px 3px no-repeat, #5e5950; }
.tray { display: flex; align-items: center; margin-left: auto; gap: 11px; padding-right: 30px; font-size: 14px; }
.tray svg { width: 20px; height: 20px; fill: none; stroke: #fff; stroke-width: 1.3; }
.tray .chev { width: 16px; height: 16px; }
.weather { display: flex; align-items: center; gap: 10px; color: #fff; text-decoration: none; font-size: 17px; margin-right: 9px; }
.tray .weather svg { width: 28px; height: 24px; stroke: none; margin-right: 2px; }
.lang { margin-left: 2px; }
.tray time { width: 72px; text-align: center; line-height: 23px; margin-left: 2px; white-space: nowrap; }
.note { margin-left: 9px; }
.tray .note svg { width: 22px; height: 22px; }
```
